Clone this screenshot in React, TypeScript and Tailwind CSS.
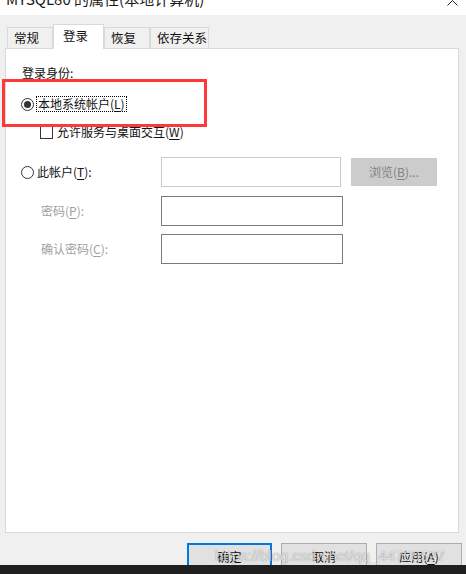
import React from "react";

const Radio = ({ checked }: { checked?: boolean }) => (
  <span className="flex h-[13px] w-[13px] shrink-0 items-center justify-center rounded-full border border-[#333333] bg-white">
    {checked && <span className="h-[7px] w-[7px] rounded-full bg-[#333333]" />}
  </span>
);

const Key = ({ k }: { k: string }) => (
  <>
    (<span className="underline underline-offset-2">{k}</span>)
  </>
);

const Tab = ({ label, active, w }: { label: string; active?: boolean; w: string }) =>
  active ? (
    <div className={`relative z-10 -mb-px flex h-[25px] ${w} shrink-0 items-start whitespace-nowrap border border-b-0 border-[#d9d9d9] bg-white pl-[9px] pt-[3px] text-[12.5px] leading-[16px]`}>
      {label}
    </div>
  ) : (
    <div className={`flex h-[21px] ${w} shrink-0 items-center whitespace-nowrap border border-b-0 border-[#d9d9d9] pl-[6px] text-[12.5px] leading-[16px]`}>
      {label}
    </div>
  );

export default function App() {
  return (
    <div className="relative h-[574px] w-[466px] overflow-hidden bg-[#f0f0f0] font-['Noto_Sans_CJK_SC','Microsoft_YaHei',sans-serif] text-[12px] text-[#111111]">
      {/* title bar, cut off at the top */}
      <div className="relative h-[15px] overflow-hidden bg-white">
        <div className="ml-[6px] mt-[-10px] text-[15px] leading-[18px] text-[#1a1a1a]">
          MYSQL80 的属性(本地计算机)
        </div>
        <svg className="absolute right-[8px] top-0" width="11" height="6" viewBox="0 0 11 6">
          <path d="M0.5 5.5 L5.5 0.5 L10.5 5.5" fill="none" stroke="#222" strokeWidth="1" />
        </svg>
      </div>

      {/* tabs */}
      <div className="flex items-end pl-[7px] pt-[9px]">
        <Tab label="常规" w="w-[46px]" />
        <Tab label="登录" w="w-[51px]" active />
        <Tab label="恢复" w="w-[46px]" />
        <Tab label="依存关系" w="w-[59px]" />
      </div>

      {/* panel */}
      <div className="ml-[5px] flex h-[485px] w-[454px] flex-col border border-[#d9d9d9] bg-white pl-[15px]">
        <div className="ml-[1px] mt-[16px] leading-[16px]">登录身份:</div>

        <div className="mt-[15px] flex h-[16px] items-center">
          <Radio checked />
          <span className="ml-[2px] border border-dotted border-black pl-[1px] pr-[1px] leading-[14px]">
            本地系统帐户<Key k="L" />
          </span>
        </div>

        <div className="ml-[19px] mt-[12px] flex h-[16px] items-center">
          <span className="h-[13px] w-[13px] border border-[#333333] bg-white" />
          <span className="ml-[4px] leading-[16px]">
            允许服务与桌面交互<Key k="W" />
          </span>
        </div>

        <div className="mt-[17px] flex h-[30px] items-center">
          <Radio />
          <span className="ml-[3px] w-[124px]">
            此帐户<Key k="T" />:
          </span>
          <div className="h-[30px] w-[180px] border border-[#cccccc] bg-white" />
          <div className="ml-[10px] flex h-[28px] w-[86px] items-center justify-center border border-[#cccccc] bg-[#cccccc] text-[#838383]">
            浏览<Key k="B" />...
          </div>
        </div>

        <div className="mt-[9px] flex h-[30px] items-center">
          <span className="ml-[20px] w-[120px] text-[#a0a0a0]">
            密码<Key k="P" />:
          </span>
          <div className="h-[30px] w-[182px] border border-[#7a7a7a] bg-white" />
        </div>

        <div className="mt-[8px] flex h-[30px] items-center">
          <span className="ml-[20px] w-[120px] text-[#a0a0a0]">
            确认密码<Key k="C" />:
          </span>
          <div className="h-[30px] w-[182px] border border-[#7a7a7a] bg-white" />
        </div>
      </div>

      {/* buttons */}
      <div className="mt-[10px] flex gap-[9px] pl-[187px]">
        <div className="flex h-[30px] w-[85px] items-start justify-center border-2 border-[#0078d7] bg-[#e1e1e1] pt-[4px] leading-[16px]">
          确定
        </div>
        <div className="flex h-[30px] w-[86px] items-start justify-center border border-[#adadad] bg-[#e1e1e1] pt-[5px] leading-[16px]">
          取消
        </div>
        <div className="flex h-[30px] w-[86px] items-start justify-center border border-[#adadad] bg-[#e1e1e1] pt-[5px] leading-[16px]">
          应用<Key k="A" />
        </div>
      </div>

      {/* red annotation box */}
      <div className="absolute left-[2px] top-[79px] h-[48px] w-[205px] border-[3px] border-[#ff3838]" />

      {/* dark strip and watermark */}
      <div className="absolute bottom-0 left-0 h-[9px] w-full bg-[#1f1f1f]" />
      <div className="absolute left-[215px] top-[546px] font-['Liberation_Sans',sans-serif] text-[15px] leading-[20px] text-white/75 [text-shadow:0_0_1px_rgba(0,0,0,0.5)]">
        https://blog.csdn.net/qq_44709527
      </div>
    </div>
  );
}
